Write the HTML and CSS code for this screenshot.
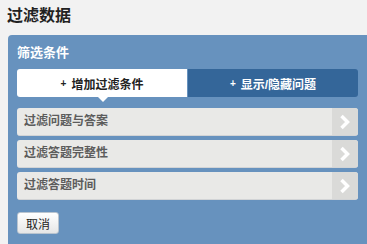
FILE: index.html
```html
<!DOCTYPE html>
<html lang="zh-CN">
<head>
  <meta charset="UTF-8">
  <title>过滤数据</title>
  <link rel="stylesheet" href="styles.css">
</head>
<body>
  <h1 class="page-title">过滤数据</h1>
  <div class="filter-panel">
    <h2 class="panel-title">筛选条件</h2>
    <div class="tabs">
      <div class="tab active"><span class="plus">+</span>增加过滤条件</div>
      <div class="tab"><span class="plus">+</span>显示/隐藏问题</div>
    </div>
    <ul class="filter-list">
      <li class="filter-row">
        <span class="filter-label">过滤问题与答案</span>
        <span class="filter-go"><svg width="12" height="16" viewBox="0 0 12 16"><path d="M2.5 2 L8.5 8 L2.5 14" fill="none" stroke="#fff" stroke-width="3.5"/></svg></span>
      </li>
      <li class="filter-row">
        <span class="filter-label">过滤答题完整性</span>
        <span class="filter-go"><svg width="12" height="16" viewBox="0 0 12 16"><path d="M2.5 2 L8.5 8 L2.5 14" fill="none" stroke="#fff" stroke-width="3.5"/></svg></span>
      </li>
      <li class="filter-row">
        <span class="filter-label">过滤答题时间</span>
        <span class="filter-go"><svg width="12" height="16" viewBox="0 0 12 16"><path d="M2.5 2 L8.5 8 L2.5 14" fill="none" stroke="#fff" stroke-width="3.5"/></svg></span>
      </li>
    </ul>
    <button class="btn-cancel">取消</button>
  </div>
</body>
</html>
```

FILE: styles.css
```css
body {
  margin: 0;
  background-color: #f2f2f2;
  font-family: "Liberation Sans", "Noto Sans CJK SC", sans-serif;
  overflow: hidden;
}

.page-title {
  margin: 0;
  padding: 5px 0 0 7px;
  height: 30px;
  font-size: 16px;
  line-height: 22px;
  font-weight: bold;
  color: #222;
}

.filter-panel {
  margin-left: 8px;
  width: 351px;
  height: 207px;
  padding: 9px 0 0 9px;
  background-color: #6792be;
  border-radius: 4px 0 0 4px;
}

.panel-title {
  margin: 0 0 7px;
  font-size: 13px;
  line-height: 18px;
  font-weight: bold;
  color: #fff;
}

.tabs {
  display: flex;
  width: 341px;
  height: 28px;
}

.tab {
  flex: 1;
  display: flex;
  align-items: center;
  justify-content: center;
  font-size: 12px;
  font-weight: bold;
  color: #fff;
  background-color: #346699;
  border-radius: 0 3px 3px 0;
  margin-left: 1px;
}

.tab .plus {
  font-size: 10px;
  margin-right: 5px;
}

.tab.active {
  position: relative;
  color: #222;
  background-color: #fff;
  border-radius: 3px 0 0 3px;
  margin-left: 0;
}

.tab.active::after {
  content: "";
  position: absolute;
  left: 81px;
  bottom: -5px;
  border-left: 5px solid transparent;
  border-right: 5px solid transparent;
  border-top: 5px solid #fff;
}

.filter-list {
  list-style: none;
  margin: 11px 0 0;
  padding: 0;
  width: 341px;
}

.filter-row {
  display: flex;
  height: 27px;
  margin-bottom: 4px;
  background-color: #e9e9e7;
  border-bottom: 1px solid #d2d4d6;
  border-radius: 3px;
  overflow: hidden;
}

.filter-label {
  flex: 1;
  padding-left: 7px;
  line-height: 27px;
  font-size: 12px;
  font-weight: bold;
  color: #5c5c5c;
}

.filter-go {
  width: 26px;
  display: flex;
  align-items: center;
  justify-content: center;
  background-color: #dadad8;
}

.btn-cancel {
  margin-top: 8px;
  width: 42px;
  height: 22px;
  padding: 0;
  font-family: "Liberation Sans", "Noto Sans CJK SC", sans-serif;
  font-size: 12px;
  color: #222;
  background: linear-gradient(#ffffff, #e6e6e6);
  border: 1px solid #b9c4cf;
  border-radius: 3px;
}
```
